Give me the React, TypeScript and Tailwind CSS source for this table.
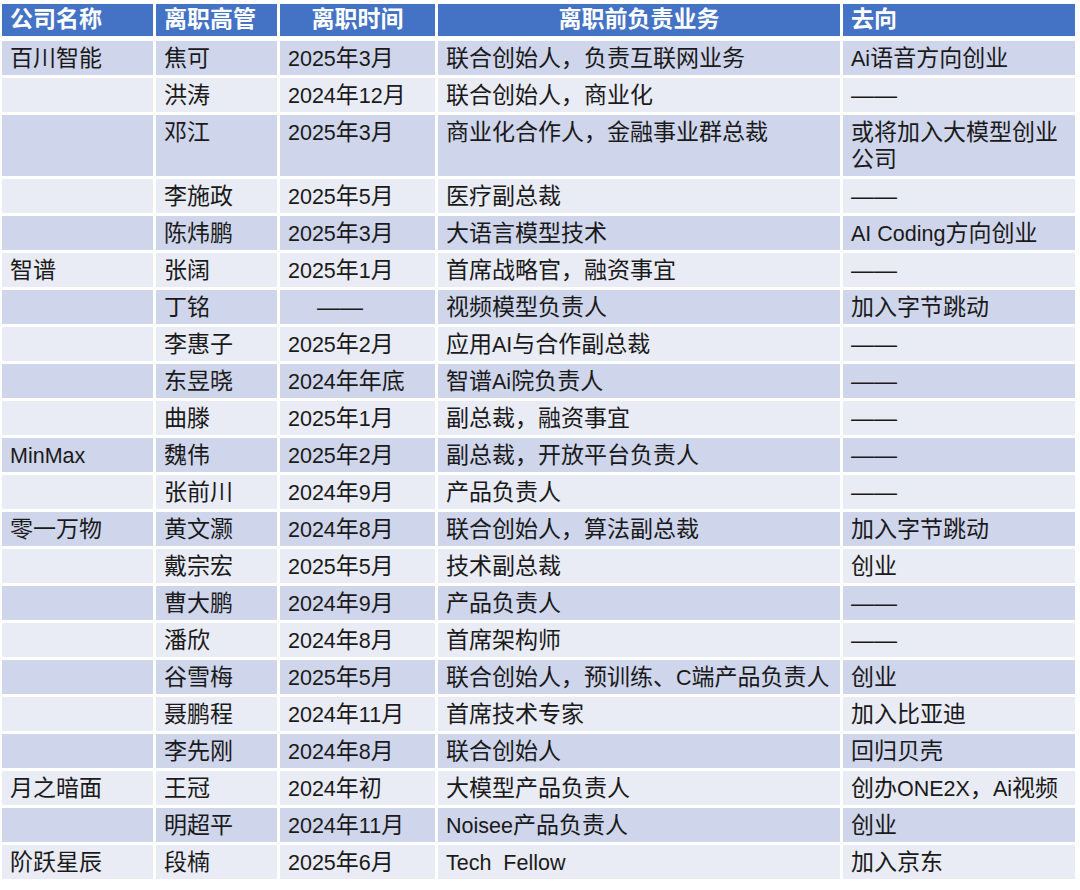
import { Fragment } from "react"

type Row = {
  company: string
  name: string
  time: string
  duty: string
  dest: string
  tall?: boolean
}

const DASH = "——"

const rows: Row[] = [
  { company: "百川智能", name: "焦可", time: "2025年3月", duty: "联合创始人，负责互联网业务", dest: "Ai语音方向创业" },
  { company: "", name: "洪涛", time: "2024年12月", duty: "联合创始人，商业化", dest: DASH },
  { company: "", name: "邓江", time: "2025年3月", duty: "商业化合作人，金融事业群总裁", dest: "或将加入大模型创业\n公司", tall: true },
  { company: "", name: "李施政", time: "2025年5月", duty: "医疗副总裁", dest: DASH },
  { company: "", name: "陈炜鹏", time: "2025年3月", duty: "大语言模型技术", dest: "AI Coding方向创业" },
  { company: "智谱", name: "张阔", time: "2025年1月", duty: "首席战略官，融资事宜", dest: DASH },
  { company: "", name: "丁铭", time: DASH, duty: "视频模型负责人", dest: "加入字节跳动" },
  { company: "", name: "李惠子", time: "2025年2月", duty: "应用AI与合作副总裁", dest: DASH },
  { company: "", name: "东昱晓", time: "2024年年底", duty: "智谱Ai院负责人", dest: DASH },
  { company: "", name: "曲滕", time: "2025年1月", duty: "副总裁，融资事宜", dest: DASH },
  { company: "MinMax", name: "魏伟", time: "2025年2月", duty: "副总裁，开放平台负责人", dest: DASH },
  { company: "", name: "张前川", time: "2024年9月", duty: "产品负责人", dest: DASH },
  { company: "零一万物", name: "黄文灏", time: "2024年8月", duty: "联合创始人，算法副总裁", dest: "加入字节跳动" },
  { company: "", name: "戴宗宏", time: "2025年5月", duty: "技术副总裁", dest: "创业" },
  { company: "", name: "曹大鹏", time: "2024年9月", duty: "产品负责人", dest: DASH },
  { company: "", name: "潘欣", time: "2024年8月", duty: "首席架构师", dest: DASH },
  { company: "", name: "谷雪梅", time: "2025年5月", duty: "联合创始人，预训练、C端产品负责人", dest: "创业" },
  { company: "", name: "聂鹏程", time: "2024年11月", duty: "首席技术专家", dest: "加入比亚迪" },
  { company: "", name: "李先刚", time: "2024年8月", duty: "联合创始人", dest: "回归贝壳" },
  { company: "月之暗面", name: "王冠", time: "2024年初", duty: "大模型产品负责人", dest: "创办ONE2X，Ai视频" },
  { company: "", name: "明超平", time: "2024年11月", duty: "Noisee产品负责人", dest: "创业" },
  { company: "阶跃星辰", name: "段楠", time: "2025年6月", duty: "Tech  Fellow", dest: "加入京东" },
]

const cols = "grid grid-cols-[151px_121px_155px_402px_232px] gap-x-[3px]"

// latin runs are set a little smaller than the CJK text, like the source slide
function Mixed({ text }: { text: string }) {
  const parts = text.split(/([A-Za-z0-9 ]+)/)
  return (
    <>
      {parts.map((p, i) =>
        /^[A-Za-z0-9 ]+$/.test(p) ? (
          <span key={i} className="text-[21.5px]">
            {p}
          </span>
        ) : (
          <Fragment key={i}>{p}</Fragment>
        )
      )}
    </>
  )
}

export default function App() {
  return (
    <div
      className="w-[1080px] h-[890px] bg-white pt-[4px] pl-[2px] text-[23px] text-[#1a1a1a]"
      style={{ fontFamily: '"Liberation Sans", "Noto Sans CJK SC", sans-serif' }}
    >
      <div className={`${cols} h-[32px] mb-[5px] font-bold text-white leading-[30px]`}>
        <div className="bg-[#4472c4] pl-[8px]">公司名称</div>
        <div className="bg-[#4472c4] pl-[8px]">离职高管</div>
        <div className="bg-[#4472c4] text-center">离职时间</div>
        <div className="bg-[#4472c4] text-center">离职前负责业务</div>
        <div className="bg-[#4472c4] pl-[8px]">去向</div>
      </div>

      <div className="flex flex-col gap-y-[3px]">
        {rows.map((row, i) => {
          const bg = i % 2 === 0 ? "bg-[#cfd5ea]" : "bg-[#e9ebf5]"
          const cell = `${bg} pl-[8px] pt-[4px] leading-[27px] whitespace-pre`
          return (
            <div key={row.name} className={`${cols} ${row.tall ? "h-[61px]" : "h-[34px]"}`}>
              <div className={cell}>
                <Mixed text={row.company} />
              </div>
              <div className={cell}>{row.name}</div>
              <div className={`${cell} ${row.time === DASH ? "pl-[37px]" : ""}`}>
                <Mixed text={row.time} />
              </div>
              <div className={cell}>
                <Mixed text={row.duty} />
              </div>
              <div className={cell}>
                <Mixed text={row.dest} />
              </div>
            </div>
          )
        })}
      </div>
    </div>
  )
}
